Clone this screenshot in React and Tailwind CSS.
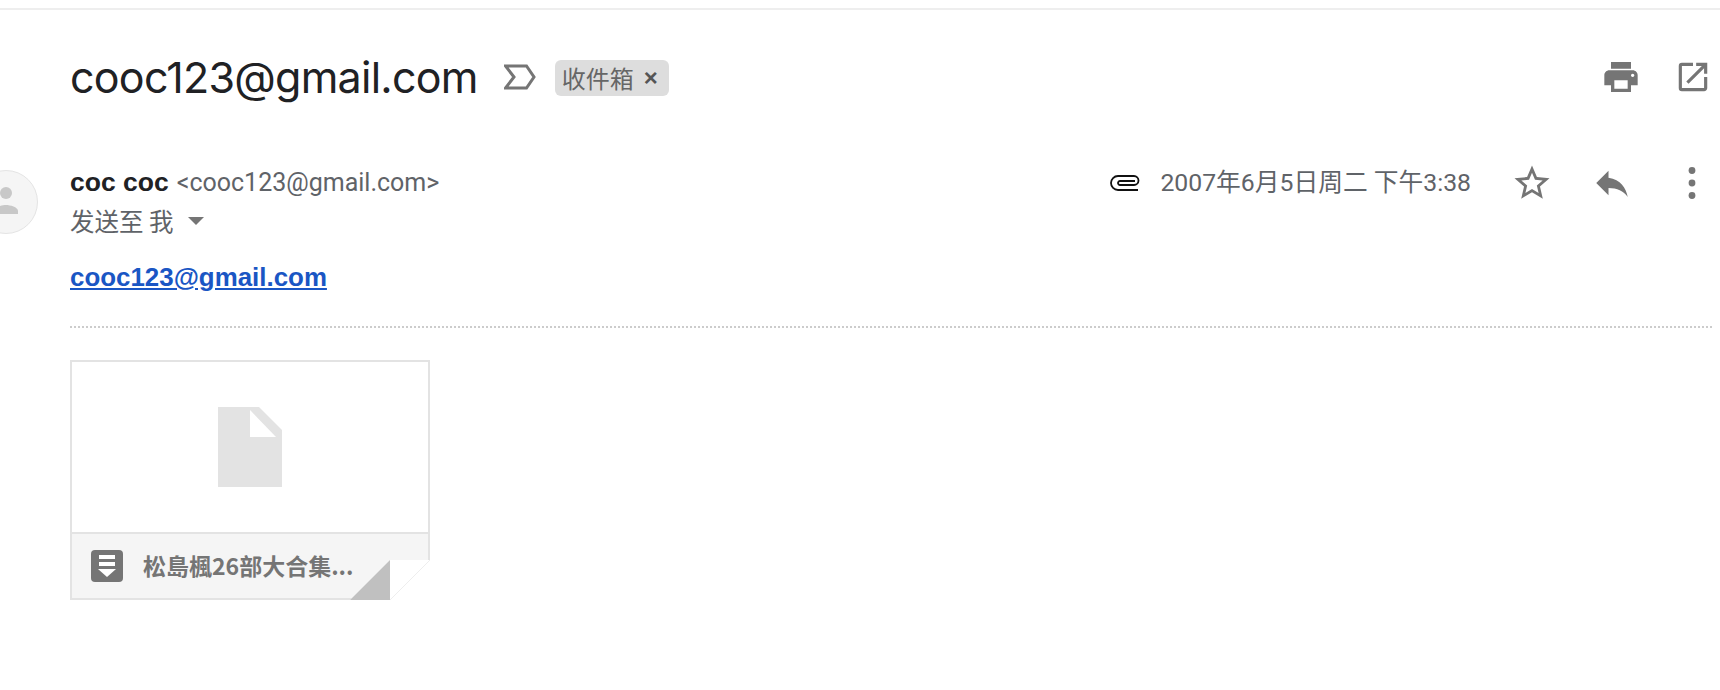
import React from "react";

const CJK = '"Noto Sans CJK SC"';

const SnoozeArrow = () => (
  <svg width="32" height="26" viewBox="0 0 32 26" fill="none" stroke="#757575" strokeWidth="3">
    <path d="M1.5 2h21L30 13l-7.5 11h-21L10 13z" />
  </svg>
);

const PrintIcon = () => (
  <svg width="40" height="40" viewBox="0 0 24 24" fill="#757575">
    <path d="M19 8H5c-1.66 0-3 1.34-3 3v6h4v4h12v-4h4v-6c0-1.66-1.34-3-3-3zm-3 11H8v-5h8v5zm3-7c-.55 0-1-.45-1-1s.45-1 1-1 1 .45 1 1-.45 1-1 1zm-1-9H6v4h12V3z" />
  </svg>
);

const OpenIcon = () => (
  <svg width="38" height="38" viewBox="0 0 24 24" fill="#757575">
    <path d="M19 19H5V5h7V3H5a2 2 0 0 0-2 2v14a2 2 0 0 0 2 2h14c1.1 0 2-.9 2-2v-7h-2v7zM14 3v2h3.59l-9.83 9.83 1.41 1.41L19 6.41V10h2V3h-7z" />
  </svg>
);

const ClipIcon = () => (
  <svg width="32" height="16" viewBox="0 0 32 16" fill="none" stroke="#111" strokeWidth="1.8">
    <path d="M28 15H8a7 7 0 0 1 0-14h16a4.5 4.5 0 0 1 0 9H10a2 2 0 0 1 0-4h15" />
  </svg>
);

const StarIcon = () => (
  <svg width="42" height="42" viewBox="0 0 24 24" fill="#757575">
    <path d="M22 9.24l-7.19-.62L12 2 9.19 8.63 2 9.24l5.46 4.73L5.82 21 12 17.27 18.18 21l-1.63-7.03L22 9.24zM12 15.4l-3.76 2.27 1-4.28-3.32-2.88 4.38-.38L12 6.1l1.71 4.04 4.38.38-3.32 2.88 1 4.28L12 15.4z" />
  </svg>
);

const ReplyIcon = () => (
  <svg width="42" height="42" viewBox="0 0 24 24" fill="#757575">
    <path d="M10 9V5l-7 7 7 7v-4.1c5 0 8.5 1.6 11 5.1-1-5-4-10-11-11z" />
  </svg>
);

const DotsIcon = () => (
  <svg width="10" height="32" viewBox="0 0 10 32" fill="#757575">
    <circle cx="5" cy="3.5" r="3.4" />
    <circle cx="5" cy="16" r="3.4" />
    <circle cx="5" cy="28.5" r="3.4" />
  </svg>
);

const FileIcon = () => (
  <svg width="64" height="80" viewBox="0 0 64 80">
    <path d="M0 0h41l23 23v57H0z" fill="#e3e3e3" />
    <path d="M32 3v27h26z" fill="#fff" />
  </svg>
);

const ArchiveIcon = () => (
  <svg width="32" height="32" viewBox="0 0 32 32">
    <rect width="32" height="32" rx="4" fill="#757575" />
    <path d="M8 5h16v4H8zM8 12h16v4H8z" fill="#fff" />
    <path d="M7 19h18l-9 8z" fill="#fff" />
  </svg>
);

const PersonIcon = () => (
  <svg width="32" height="32" viewBox="0 0 32 32" fill="#c8c8c8">
    <circle cx="16" cy="7" r="6" />
    <path d="M4 28v-3c0-4 8-6 12-6s12 2 12 6v3z" />
  </svg>
);

export default function App() {
  return (
    <div className="w-[1720px] h-[690px] overflow-hidden bg-white pt-2 font-['Roboto',sans-serif]">
      <div className="h-0.5 bg-[#eeeeee]" />

      <div className="pl-[70px] pr-2">
        {/* Subject row */}
        <div className="flex items-center h-[66px] mt-[34px]">
          <h1 className="text-[43px] leading-none text-[#202124] font-['Inter',sans-serif] font-normal tracking-[-0.75px]">
            cooc123@gmail.com
          </h1>
          <div className="ml-[26px]">
            <SnoozeArrow />
          </div>
          <div
            className="ml-[19px] mt-0.5 h-9 w-[114px] pr-1 rounded-md bg-[#dddddd] flex items-center justify-center gap-2.5 text-[24px] text-[#666666]"
            style={{ fontFamily: CJK }}
          >
            <span>收件箱</span>
            <span className="font-bold text-[24px] leading-none text-[#555555] font-['Liberation_Sans',sans-serif]">×</span>
          </div>
          <div className="ml-auto flex items-center gap-[33px]">
            <PrintIcon />
            <OpenIcon />
          </div>
        </div>

        {/* Sender row */}
        <div className="flex mt-[61px]">
          <div className="-ml-[96px] mr-8 mt-[-1px] w-16 h-16 rounded-full bg-[#f5f5f5] border border-[#e4e4e4] flex items-center justify-center shrink-0">
            <PersonIcon />
          </div>
          <div className="flex-1 min-w-0">
            <div className="flex items-center h-8 -mt-1">
              <span className="text-[26.5px] font-bold text-[#202124] font-['Liberation_Sans',sans-serif]">coc coc</span>
              <span className="ml-2 text-[25px] text-[#5f6368]">&lt;cooc123@gmail.com&gt;</span>
              <div className="ml-auto flex items-center">
                <ClipIcon />
                <span className="ml-[18px] text-[24.75px] text-[#5f6368]" style={{ fontFamily: `Roboto, ${CJK}, sans-serif` }}>
                  2007年6月5日周二 下午3:38
                </span>
                <div className="ml-10">
                  <StarIcon />
                </div>
                <div className="ml-[38px]">
                  <ReplyIcon />
                </div>
                <div className="ml-[54px] mr-[15px]">
                  <DotsIcon />
                </div>
              </div>
            </div>
            <div className="flex items-center mt-1.5 text-[24.5px] text-[#5f6368] h-8" style={{ fontFamily: CJK }}>
              <span>发送至 我</span>
              <span className="ml-[14px] w-0 h-0 border-x-8 border-x-transparent border-t-[8px] border-t-[#757575]" />
            </div>
          </div>
        </div>

        {/* Body */}
        <a className="block mt-6 text-[25.9px] leading-8 font-bold text-[#1a56c4] underline font-['Liberation_Sans',sans-serif]">
          cooc123@gmail.com
        </a>

        <div className="mt-[33px] border-t-2 border-dotted border-[#cccccc]" />

        {/* Attachment card */}
        <div className="relative mt-8 w-[360px] h-[240px] border-2 border-[#e3e3e3]">
          <div className="h-[170px] flex items-center justify-center">
            <FileIcon />
          </div>
          <div className="h-[66px] border-t-2 border-[#e3e3e3] bg-[#f5f5f5] flex items-center pl-[19px]">
            <ArchiveIcon />
            <span className="ml-5 -mt-0.5 text-[23px] font-bold text-[#757575]" style={{ fontFamily: `"Noto Sans CJK SC", sans-serif` }}>
              松島楓26部大合集...
            </span>
          </div>
          {/* Folded corner */}
          <svg className="absolute -right-0.5 -bottom-0.5" width="80" height="40" viewBox="0 0 80 40">
            <path d="M40 0h40v40H0z" fill="#ffffff" />
            <path d="M40 0v40H0z" fill="#c0c0c0" />
            <path d="M40 40L80 0" stroke="#eeeeee" strokeWidth="1" />
          </svg>
        </div>
      </div>
    </div>
  );
}
